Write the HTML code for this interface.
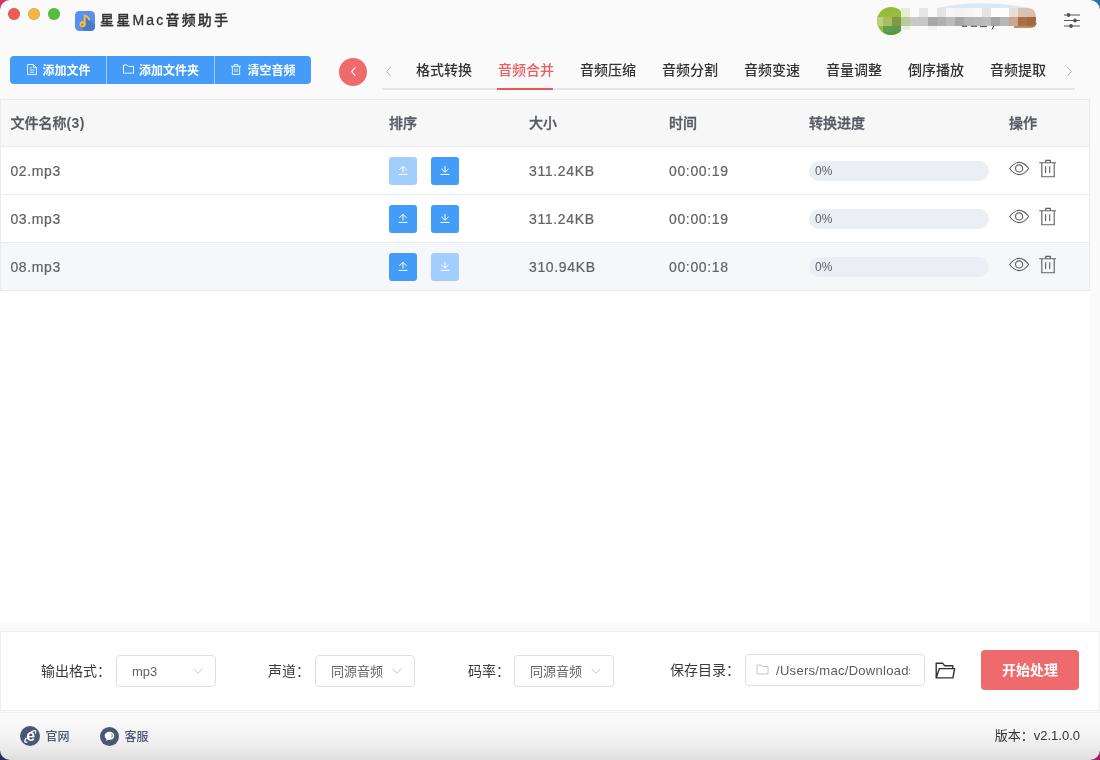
<!DOCTYPE html>
<html lang="zh-CN">
<head>
<meta charset="utf-8">
<title>星星Mac音频助手</title>
<style>
*{box-sizing:border-box;margin:0;padding:0}
html,body{width:1100px;height:760px;overflow:hidden}
body{font-family:"Liberation Sans","Noto Sans CJK SC",sans-serif;font-size:14px;color:#606266;background:#fafafa;position:relative}
.abs{position:absolute}
/* window corners (desktop showing behind rounded window) */
.corner{position:absolute;width:10px;height:10px;overflow:hidden}
.corner i{position:absolute;width:20px;height:20px;border-radius:50%;box-shadow:0 0 0 20px currentColor}
.c-tl{left:0;top:0;color:#d6336c}.c-tl i{left:0;top:0}
.c-tr{right:0;top:0;color:#1f6fb5}.c-tr i{right:0;top:0}
.c-bl{left:0;bottom:0;color:#2c2c5c}.c-bl i{left:0;bottom:0}
.c-br{right:0;bottom:0;color:#9a1f6c}.c-br i{right:0;bottom:0}
/* title bar */
.tl{position:absolute;top:8px;width:12px;height:12px;border-radius:50%;box-shadow:inset 0 0 0 .5px rgba(0,0,0,.12)}
.title{position:absolute;left:100px;top:9px;height:22px;line-height:22px;font-size:14px;font-weight:500;letter-spacing:2.2px;color:#333;-webkit-text-stroke:.3px #333;white-space:nowrap}
/* toolbar buttons */
.btngrp{position:absolute;left:10px;top:56px;height:28px;width:301px;background:#449cf8;border-radius:4px;display:flex;overflow:hidden}
.btngrp .b{height:26.6px;padding-left:1px;display:flex;align-items:center;justify-content:center;color:#fff;font-size:12px;font-weight:700;white-space:nowrap}
.btngrp .b svg{margin-right:6px;flex:none;opacity:.9}
.btngrp .sep{width:1px;background:rgba(255,255,255,.5);height:28px}
.back{position:absolute;left:339px;top:58px;width:28px;height:28px;border-radius:50%;background:#ee6a6c}
/* tabs */
.tabline{position:absolute;left:382px;top:88px;width:693px;height:2px;background:#e1e5ec}
.tab{position:absolute;top:59px;height:22px;line-height:22px;width:56px;font-size:14px;font-weight:500;color:#303133;white-space:nowrap}
.tab.on{color:#ee5c5e}
.tabbar{position:absolute;left:497px;top:88px;width:56px;height:2px;background:#ee5558}
/* table */
.whitebox{position:absolute;left:0;top:99px;width:1090px;height:524px;background:#fff}
.tablebox{position:absolute;left:0;top:99px;width:1090px;height:192px;background:#fff;border:1px solid #ebebee;border-bottom:none}
.row{position:absolute;left:0;width:1088px;height:48px;border-bottom:1px solid #ebebee}
.row.hd{top:0;height:47px;background:#f7f7f7;font-weight:500;color:#565a62;-webkit-text-stroke:.35px #565a62}
.row .c{position:absolute;top:1px;height:47px;line-height:47px;white-space:nowrap;letter-spacing:.65px;-webkit-text-stroke:.2px #606266}
.row.hd .c{top:0;letter-spacing:0;-webkit-text-stroke:inherit}
.sbtn{position:absolute;top:10px;width:28px;height:28px;border-radius:3px;background:#439cf8}
.sbtn.dis{background:#a2cefb}
.sbtn svg{position:absolute;left:8px;top:8px}
.prog{position:absolute;left:808px;top:14px;width:180px;height:20px;border-radius:10px;background:#ebeef5;font-size:12px;line-height:20px;padding-left:6px;color:#606266}
/* bottom panel */
.panel{position:absolute;left:0;top:631px;width:1100px;height:80px;background:#fff;border:1px solid #eee}
.lbl{position:absolute;top:660px;height:22px;line-height:22px;font-size:14px;color:#3a3a3a;white-space:nowrap}
.sel{position:absolute;top:655px;width:100px;height:32px;border:1px solid #dcdfe6;border-radius:4px;background:#fff;font-size:13px;line-height:31px;padding-left:15px;color:#606266;white-space:nowrap}
.sel svg{position:absolute;right:11px;top:11px}
.inp{position:absolute;left:745px;top:654px;width:180px;height:32px;border:1px solid #dcdfe6;border-radius:4px;background:#fff;font-size:13px;line-height:32px;color:#5a5c60;white-space:nowrap;overflow:hidden}
.inp span{position:absolute;left:30px;top:0;width:134px;overflow:hidden;display:block;letter-spacing:.3px}
.go{position:absolute;left:981px;top:650px;width:98px;height:40px;border-radius:4px;background:#ee6a6c;color:#fff;font-size:14px;font-weight:700;line-height:40px;text-align:center}
/* footer */
.foot{position:absolute;left:0;top:711px;width:1100px;height:49px;border-top:1px solid #fafafa;background:linear-gradient(#f0f0f0 0,#f0f0f0 1px,#fafafa 1px,#f9f9f9 25%,#f3f3f3 50%,#ebebeb 75%,#dfdfdf 100%)}
.ftxt{position:absolute;top:727px;height:20px;line-height:20px;font-size:12px;font-weight:500;color:#4a5672;white-space:nowrap;margin-left:-.6px}
.ver{position:absolute;right:20px;top:726px;height:20px;line-height:20px;font-size:13px;color:#333;white-space:nowrap}
</style>
</head>
<body>
<div id="app" style="position:absolute;left:0;top:0;width:1100px;height:760px;will-change:transform;opacity:.999">
<!-- title bar -->
<div class="tl" style="left:8px;background:#ee5b54"></div>
<div class="tl" style="left:28px;background:#f6b63f"></div>
<div class="tl" style="left:48px;background:#53c03a"></div>
<svg class="abs" style="left:75px;top:11px" width="20" height="20" viewBox="0 0 20 20">
  <rect width="20" height="20" rx="4.5" fill="#5b8ff0"/>
  <path d="M11 5 L20 14 V15.5 Q20 20 15.5 20 H9 L5.5 15 L10 12 Z" fill="#4b79cf"/>
  <circle cx="7.6" cy="13.2" r="3" fill="#f6c430"/>
  <circle cx="7.2" cy="13.4" r="1" fill="#e8453c"/>
  <path d="M9.6 13.2 V4.6 Q13 5 14.2 8.6" fill="none" stroke="#f6c430" stroke-width="1.8" stroke-linecap="round"/>
</svg>
<div class="title">星星Mac音频助手</div>

<!-- user (mosaic) -->
<svg class="abs" style="left:870px;top:0" width="180" height="40" viewBox="0 0 180 40">
<defs><clipPath id="cc"><circle cx="21" cy="21" r="14"/></clipPath><clipPath id="cr"><path d="M0 8H157Q166 8 166 17V21Q166 26 160 26H0Z"/></clipPath></defs>
<path d="M66 8.2Q112 -1.6 160 8.2Z" fill="#dde7f0"/>
<circle cx="21" cy="21" r="14" fill="#8cc22e"/>
<g clip-path="url(#cc)">
<rect x="13" y="11" width="9" height="6" fill="#9db83c"/>
<rect x="22" y="11" width="9" height="6" fill="#9fba3e"/>
<rect x="4" y="17" width="9" height="9" fill="#b9d382"/>
<rect x="13" y="17" width="9" height="9" fill="#a9bd5c"/>
<rect x="22" y="17" width="9" height="9" fill="#7d9a44"/>
<rect x="13" y="26" width="9" height="6" fill="#5f9e52"/>
<rect x="22" y="26" width="9" height="6" fill="#5c9a50"/>
<path d="M13 32L31 32L31 40L20 40Z" fill="#5a9a3a"/>
</g>
<g clip-path="url(#cr)">
<rect x="31" y="8" width="9" height="9" fill="#e9edd0"/>
<rect x="40" y="8" width="9" height="9" fill="#fafafa"/>
<rect x="49" y="8" width="9" height="9" fill="#e6e6e6"/>
<rect x="58" y="8" width="9" height="9" fill="#fafafa"/>
<rect x="67" y="8" width="9" height="9" fill="#e4e4e4"/>
<rect x="76" y="8" width="9" height="9" fill="#f6f6f6"/>
<rect x="85" y="8" width="9" height="9" fill="#f2f2f2"/>
<rect x="94" y="8" width="9" height="9" fill="#f4f4f4"/>
<rect x="103" y="8" width="9" height="9" fill="#f8f8f8"/>
<rect x="112" y="8" width="9" height="9" fill="#e4e4e4"/>
<rect x="121" y="8" width="9" height="9" fill="#fdfdfd"/>
<rect x="130" y="8" width="9" height="9" fill="#fdfdfd"/>
<rect x="139" y="8" width="9" height="9" fill="#e8ddd6"/>
<rect x="148" y="8" width="9" height="9" fill="#d8c2b2"/>
<rect x="157" y="8" width="9" height="9" fill="#d6bfae"/>
<rect x="31" y="17" width="9" height="9" fill="#bccb96"/>
<rect x="40" y="17" width="9" height="9" fill="#c8c8c8"/>
<rect x="49" y="17" width="9" height="9" fill="#c6c6c6"/>
<rect x="58" y="17" width="9" height="9" fill="#a8a8a8"/>
<rect x="67" y="17" width="9" height="9" fill="#b0b0b0"/>
<rect x="76" y="17" width="9" height="9" fill="#bcbcbc"/>
<rect x="85" y="17" width="9" height="9" fill="#a8a8a8"/>
<rect x="94" y="17" width="9" height="9" fill="#b4b4b4"/>
<rect x="103" y="17" width="9" height="9" fill="#b8b8b8"/>
<rect x="112" y="17" width="9" height="9" fill="#bcbcbc"/>
<rect x="121" y="17" width="9" height="9" fill="#a6a6a6"/>
<rect x="130" y="17" width="9" height="9" fill="#b6b6b6"/>
<rect x="139" y="17" width="9" height="9" fill="#c9a88e"/>
<rect x="148" y="17" width="9" height="9" fill="#a87044"/>
<rect x="157" y="17" width="9" height="9" fill="#a06a40"/>
</g>
<rect x="31" y="26" width="9" height="4" fill="#e9edde"/>
<rect x="58" y="26" width="9" height="4" fill="#f1f1f1"/>
<path d="M144 27H160Q165 27 166 23" fill="none" stroke="#a8693a" stroke-width="1.6"/>
<path d="M92 26.3h5M101 26.3h6M110 26.6h7M124 25.5l-2 4" stroke="#444" stroke-width="1" fill="none"/>
</svg>

<!-- settings icon -->
<svg class="abs" style="left:1063px;top:11px" width="18" height="18" viewBox="0 0 18 18" fill="none" stroke="#555" stroke-width="1.2">
  <path d="M1 4H17M1 9.5H17M1 15H17"/>
  <circle cx="5.5" cy="4" r="1.3" fill="#555"/><circle cx="12" cy="9.5" r="1.3" fill="#555"/><circle cx="8" cy="15" r="1.3" fill="#555"/>
</svg>

<!-- toolbar -->
<div class="btngrp">
  <div class="b" style="width:96px"><svg style="margin:0 5px 0 1px" width="10" height="11" viewBox="0 0 11 12" fill="none" stroke="#fff" stroke-width="1.05"><path d="M1 .5H7L10.5 4V11.5H.5V.5Z M7 .5V4H10.5 M3 4.2H5.2M3 6.6H8M3 9H8"/></svg>添加文件</div>
  <div class="sep"></div>
  <div class="b" style="width:107px"><svg style="margin-right:5px" width="11" height="10" viewBox="0 0 11 10" fill="none" stroke="#fff" stroke-width="1"><path d="M.5 1H4L5.5 2.4H10.5V9.2H.5Z"/></svg>添加文件夹</div>
  <div class="sep"></div>
  <div class="b" style="width:96px"><svg width="10" height="11" viewBox="0 0 11 12" fill="none" stroke="#fff" stroke-width="1.05"><path d="M0 2.5H11M3.5 2.5V.5H7.5V2.5M1.5 2.5V11.5H9.5V2.5M4.3 5V9M6.7 5V9"/></svg>清空音频</div>
</div>
<div class="back"><svg class="abs" style="left:0;top:0" width="28" height="28" viewBox="0 0 28 28" fill="none" stroke="#fff" stroke-width="1.1"><path d="M16.3 9.4L12.7 13.6L16.3 17.8"/></svg></div>

<!-- tabs -->
<svg class="abs" style="left:383px;top:65px" width="10" height="14" viewBox="0 0 10 14" fill="none" stroke="#a8abb2" stroke-width="1"><path d="M7.4 2.2L3.7 6.5L7.4 10.8"/></svg>
<svg class="abs" style="left:1063.6px;top:65px" width="10" height="14" viewBox="0 0 10 14" fill="none" stroke="#a8abb2" stroke-width="1"><path d="M3.6 2.2L7.3 6.5L3.6 10.8"/></svg>
<div class="tabline"></div>
<div class="tabbar"></div>
<div class="tab" style="left:416px">格式转换</div>
<div class="tab on" style="left:498px">音频合并</div>
<div class="tab" style="left:580px">音频压缩</div>
<div class="tab" style="left:662px">音频分割</div>
<div class="tab" style="left:744px">音频变速</div>
<div class="tab" style="left:826px">音量调整</div>
<div class="tab" style="left:908px">倒序播放</div>
<div class="tab" style="left:990px">音频提取</div>

<!-- table -->
<div class="whitebox"></div>
<div class="tablebox">
  <div class="row hd">
    <div class="c" style="left:9.4px">文件名称<span style="letter-spacing:.4px;font-weight:700;-webkit-text-stroke:0">(3)</span></div>
    <div class="c" style="left:388px">排序</div>
    <div class="c" style="left:528px">大小</div>
    <div class="c" style="left:668px">时间</div>
    <div class="c" style="left:808px">转换进度</div>
    <div class="c" style="left:1008px">操作</div>
  </div>
  <div class="row" style="top:47px">
    <div class="c" style="left:9.4px">02.mp3</div>
    <div class="sbtn dis" style="left:388px"><svg width="12" height="12" viewBox="0 0 12 12" fill="none" stroke="#fff" stroke-width="1"><path d="M6 7.4V1.6M2.2 4.9L6 1.3L9.8 4.9M1.5 9.4H10.5"/></svg></div>
    <div class="sbtn" style="left:430px"><svg width="12" height="12" viewBox="0 0 12 12" fill="none" stroke="#fff" stroke-width="1"><path d="M6 .8V6.8M2.4 3.8L6 7.2L9.6 3.8M1.5 9.4H10.5"/></svg></div>
    <div class="c" style="left:528px">311.24KB</div>
    <div class="c" style="left:668px">00:00:19</div>
    <div class="prog">0%</div>
    <svg class="abs icons" style="left:1006px;top:10px" width="54" height="24" viewBox="0 0 54 24" fill="none" stroke="#606266" stroke-width="1.15"><path d="M2.6 11.5Q7.3 5.4 12.15 5.4T21.7 11.5Q17 17.6 12.15 17.6T2.6 11.5Z"/><circle cx="12.1" cy="11.4" r="3.6"/><path d="M32.2 5.7H49M38.7 5.5V3.4H43.4V5.5M34.8 5.7V19.7H47.2V5.7M38.6 9.2V16M42.7 9.2V16"/></svg>
  </div>
  <div class="row" style="top:95px">
    <div class="c" style="left:9.4px">03.mp3</div>
    <div class="sbtn" style="left:388px"><svg width="12" height="12" viewBox="0 0 12 12" fill="none" stroke="#fff" stroke-width="1"><path d="M6 7.4V1.6M2.2 4.9L6 1.3L9.8 4.9M1.5 9.4H10.5"/></svg></div>
    <div class="sbtn" style="left:430px"><svg width="12" height="12" viewBox="0 0 12 12" fill="none" stroke="#fff" stroke-width="1"><path d="M6 .8V6.8M2.4 3.8L6 7.2L9.6 3.8M1.5 9.4H10.5"/></svg></div>
    <div class="c" style="left:528px">311.24KB</div>
    <div class="c" style="left:668px">00:00:19</div>
    <div class="prog">0%</div>
    <svg class="abs icons" style="left:1006px;top:10px" width="54" height="24" viewBox="0 0 54 24" fill="none" stroke="#606266" stroke-width="1.15"><path d="M2.6 11.5Q7.3 5.4 12.15 5.4T21.7 11.5Q17 17.6 12.15 17.6T2.6 11.5Z"/><circle cx="12.1" cy="11.4" r="3.6"/><path d="M32.2 5.7H49M38.7 5.5V3.4H43.4V5.5M34.8 5.7V19.7H47.2V5.7M38.6 9.2V16M42.7 9.2V16"/></svg>
  </div>
  <div class="row" style="top:143px;background:#f5f7fa">
    <div class="c" style="left:9.4px">08.mp3</div>
    <div class="sbtn" style="left:388px"><svg width="12" height="12" viewBox="0 0 12 12" fill="none" stroke="#fff" stroke-width="1"><path d="M6 7.4V1.6M2.2 4.9L6 1.3L9.8 4.9M1.5 9.4H10.5"/></svg></div>
    <div class="sbtn dis" style="left:430px"><svg width="12" height="12" viewBox="0 0 12 12" fill="none" stroke="#fff" stroke-width="1"><path d="M6 .8V6.8M2.4 3.8L6 7.2L9.6 3.8M1.5 9.4H10.5"/></svg></div>
    <div class="c" style="left:528px">310.94KB</div>
    <div class="c" style="left:668px">00:00:18</div>
    <div class="prog">0%</div>
    <svg class="abs icons" style="left:1006px;top:10px" width="54" height="24" viewBox="0 0 54 24" fill="none" stroke="#606266" stroke-width="1.15"><path d="M2.6 11.5Q7.3 5.4 12.15 5.4T21.7 11.5Q17 17.6 12.15 17.6T2.6 11.5Z"/><circle cx="12.1" cy="11.4" r="3.6"/><path d="M32.2 5.7H49M38.7 5.5V3.4H43.4V5.5M34.8 5.7V19.7H47.2V5.7M38.6 9.2V16M42.7 9.2V16"/></svg>
  </div>
</div>

<!-- bottom panel -->
<div class="panel"></div>
<div class="lbl" style="left:41px">输出格式：</div>
<div class="sel" style="left:116px">mp3<svg width="12" height="8" viewBox="0 0 12 8" fill="none" stroke="#c0c4cc" stroke-width="1"><path d="M1.6 1.9L6 6.2L10.4 1.9"/></svg></div>
<div class="lbl" style="left:268px">声道：</div>
<div class="sel" style="left:315px">同源音频<svg width="12" height="8" viewBox="0 0 12 8" fill="none" stroke="#c0c4cc" stroke-width="1"><path d="M1.6 1.9L6 6.2L10.4 1.9"/></svg></div>
<div class="lbl" style="left:468px">码率：</div>
<div class="sel" style="left:514px">同源音频<svg width="12" height="8" viewBox="0 0 12 8" fill="none" stroke="#c0c4cc" stroke-width="1"><path d="M1.6 1.9L6 6.2L10.4 1.9"/></svg></div>
<div class="lbl" style="left:670px;top:659px">保存目录：</div>
<div class="inp"><svg class="abs" style="left:10px;top:9px" width="13" height="11" viewBox="0 0 13 11" fill="none" stroke="#c0c4cc" stroke-width="1"><path d="M1 1H5L6.3 2.6H12V10H1Z"/></svg><span>/Users/mac/Downloads</span></div>
<svg class="abs" style="left:934px;top:661px" width="22" height="20" viewBox="0 0 22 20" fill="none" stroke="#303133" stroke-width="1.4" stroke-linejoin="round"><path d="M2.2 16.9V2.3H8.8L10.6 4.7H18.7V7.5M2.2 16.9L5.4 7.6H20.6L18.9 16.9Z"/></svg>
<div class="go">开始处理</div>

<!-- footer -->
<div class="foot"></div>
<svg class="abs" style="left:20px;top:726.2px" width="20" height="20" viewBox="0 0 20 20"><circle cx="10" cy="10" r="10" fill="#4a5672"/><text x="10.6" y="15.3" text-anchor="middle" font-family="'Liberation Sans',sans-serif" font-weight="700" font-size="16" fill="#fff">e</text><path d="M6.4 11.6Q2.6 17.6 7.4 15.8M10.6 6.2Q17 2.4 15.4 7.6" fill="none" stroke="#fff" stroke-width="1.3"/></svg>
<div class="ftxt" style="left:46px">官网</div>
<svg class="abs" style="left:99.6px;top:726.6px" width="19" height="19" viewBox="0 0 20 20"><circle cx="10" cy="10" r="10" fill="#4a5672"/><path d="M10 5C7 5 4.9 6.9 4.9 9.3C4.9 10.7 5.6 11.9 6.8 12.7L6.5 14.8L8.7 13.5C9.1 13.6 9.5 13.6 10 13.6C13 13.6 15.1 11.7 15.1 9.3C15.1 6.9 13 5 10 5Z" fill="#fff"/><path d="M12.2 7.2Q13.6 9 12.4 11.2" fill="none" stroke="#4a5672" stroke-width=".9"/></svg>
<div class="ftxt" style="left:125px">客服</div>
<div class="ver">版本：v2.1.0.0</div>

<!-- corners -->
<div class="corner c-tl"><i></i></div>
<div class="corner c-tr"><i></i></div>
<div class="corner c-bl"><i></i></div>
<div class="corner c-br"><i></i></div>
</div>
</body>
</html>
